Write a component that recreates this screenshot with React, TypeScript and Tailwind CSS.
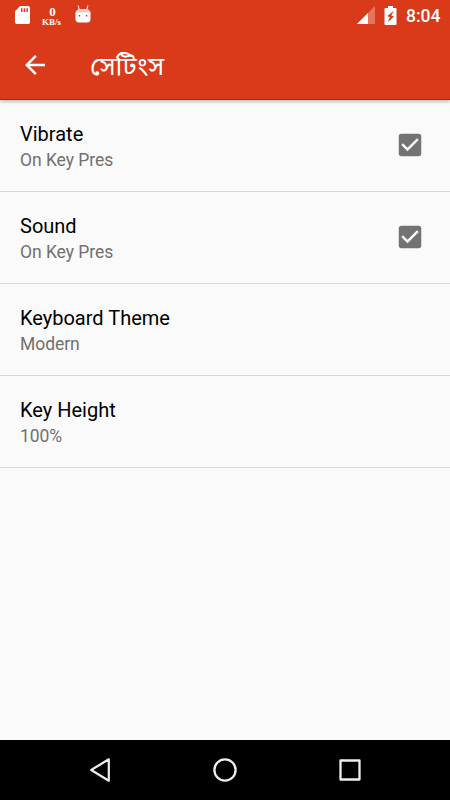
import React from "react";

function CheckedBox() {
  return (
    <svg className="-mt-px h-[30px] w-[30px]" viewBox="0 0 24 24" fill="#737373">
      <path d="M19 3H5c-1.11 0-2 .9-2 2v14c0 1.1.89 2 2 2h14c1.11 0 2-.9 2-2V5c0-1.1-.89-2-2-2zm-9 14l-5-5 1.41-1.41L10 14.17l7.59-7.59L19 8l-9 9z" />
    </svg>
  );
}

interface RowProps {
  title: string;
  summary: string;
  checked?: boolean;
}

function PreferenceRow({ title, summary, checked }: RowProps) {
  return (
    <div className="flex h-[92px] items-center justify-between border-b border-[#d6d6d6] pr-[25px] pl-5">
      <div className="pt-[2px]">
        <div className="h-[26px] text-[20px] leading-[22px] text-black">{title}</div>
        <div className="h-[22px] text-[17.5px] tracking-[-0.05px] leading-[22px] text-[#707070]">{summary}</div>
      </div>
      {checked && <CheckedBox />}
    </div>
  );
}

function StatusBar() {
  return (
    <div className="flex h-[30px] items-center justify-between pr-[9px] pl-[15px] text-white">
      <div className="flex items-center">
        <svg className="h-[18px] w-[15px]" viewBox="0 0 15 18" fill="#fff">
          <path
            fillRule="evenodd"
            d="M5.3 0H13.3Q15 0 15 1.7V16.3Q15 18 13.3 18H1.7Q0 18 0 16.3V5.3ZM6 2.3V6H7.5V2.3ZM8.7 2.3V6H10.2V2.3ZM11.4 2.3V6H12.9V2.3Z"
          />
        </svg>
        <div className="ml-[11px] flex w-[21px] flex-col items-center whitespace-nowrap pt-[3px] font-['Liberation_Serif',serif] font-bold">
          <span className="h-[11px] pl-[2px] text-[13px] leading-[10px]">0</span>
          <span className="h-[9px] text-[9px] leading-[9px]">KB/s</span>
        </div>
        <svg className="ml-[13px] h-[20px] w-[16px]" viewBox="0 0 16 20">
          <path d="M3 .5L4.5 5M13 .5L11.5 5" stroke="#fbe5e0" strokeWidth="1.1" />
          <path d="M.5 8.5Q.5 4 5 4H11Q15.5 4 15.5 8.5Z" fill="#f6cbc0" />
          <path d="M.5 7.5H15.5V14Q15.5 17.5 12 17.5H4Q.5 17.5.5 14Z" fill="#fff" />
          <path d="M3.7 10h1.5v1.5h-1.5zM10.8 10h1.5v1.5h-1.5z" fill="#d93a1a" />
        </svg>
      </div>
      <div className="flex items-center">
        <svg className="h-[18px] w-[18px]" viewBox="0 0 18 18">
          <path d="M18 0V18H0Z" fill="#fff" fillOpacity=".3" />
          <path d="M11 7V18H0Z" fill="#fff" />
        </svg>
        <svg className="ml-[9px] h-[19px] w-[13px]" viewBox="0 0 13 19">
          <path d="M4 0H9V2H11.7Q12.5 2 12.5 2.8V18Q12.5 19 11.7 19H1.3Q.5 19 .5 18V2.8Q.5 2 1.3 2H4Z" fill="#fff" />
          <path d="M9.8 4.7L3.1 10.2L5.9 11.1L3.8 16.2L10 10.4L7.2 9.4Z" fill="#d93a1a" />
        </svg>
        <span className="ml-[9px] h-[20px] w-[35px] whitespace-nowrap text-[17.5px] font-medium leading-[22px]">8:04</span>
      </div>
    </div>
  );
}

export default function App() {
  return (
    <div className="flex h-[800px] w-[450px] flex-col overflow-hidden bg-[#fafafa] font-['Roboto',sans-serif]">
      <header className="z-10 h-[100px] shrink-0 border-b border-[#cf1507] bg-[#d93a1a] shadow-[0_2px_3px_rgba(70,100,105,0.35)]">
        <StatusBar />
        <div className="flex h-[69px] items-center pl-5 text-white">
          <svg className="h-[30px] w-[30px]" viewBox="0 0 24 24" fill="#fff">
            <path d="M20 11H7.83l5.59-5.59L12 4l-8 8 8 8 1.41-1.41L7.83 13H20v-2z" />
          </svg>
          <h1 className="ml-10 pt-[2px] whitespace-nowrap font-['Roboto','Noto_Sans_Bengali',sans-serif] text-[26px] leading-[36px] font-normal">সেটিংস</h1>
        </div>
      </header>
      <main className="flex-1">
        <PreferenceRow title="Vibrate" summary="On Key Pres" checked />
        <PreferenceRow title="Sound" summary="On Key Pres" checked />
        <PreferenceRow title="Keyboard Theme" summary="Modern" />
        <PreferenceRow title="Key Height" summary="100%" />
      </main>
      <nav className="flex h-[60px] shrink-0 items-center justify-between bg-black px-[85px]">
        <svg className="h-[30px] w-[30px]" viewBox="0 0 30 30" fill="none" stroke="#eee" strokeWidth="2.2" strokeLinejoin="round">
          <path d="M23.8 4.3V25.7L6.2 15Z" />
        </svg>
        <svg className="h-[30px] w-[30px]" viewBox="0 0 30 30" fill="none" stroke="#eee" strokeWidth="2.3">
          <circle cx="15" cy="15" r="10.6" />
        </svg>
        <svg className="h-[30px] w-[30px]" viewBox="0 0 30 30" fill="none" stroke="#eee" strokeWidth="2.3" strokeLinejoin="round">
          <path d="M5.5 5.5H24.5V24.5H5.5Z" />
        </svg>
      </nav>
    </div>
  );
}
